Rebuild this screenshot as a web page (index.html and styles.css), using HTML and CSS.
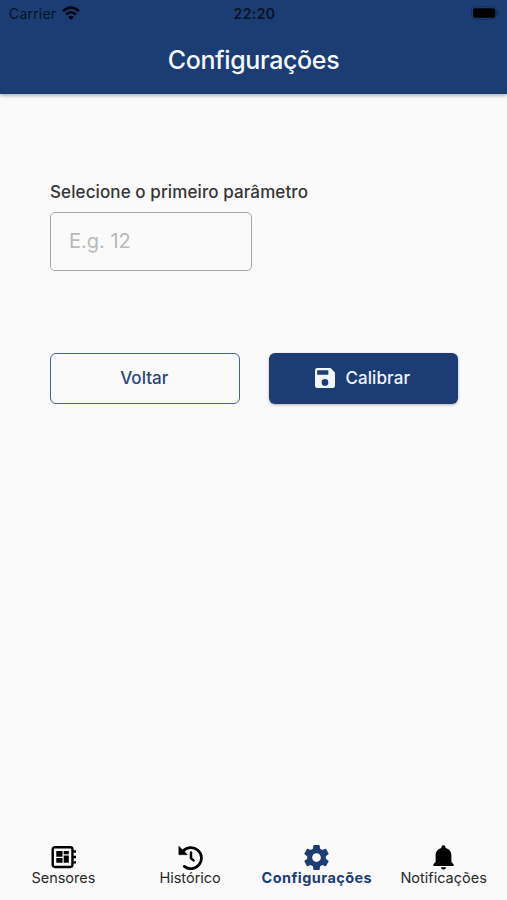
FILE: index.html
```html
<!DOCTYPE html>
<html lang="pt">
<head>
<meta charset="utf-8">
<title>Configurações</title>
<link rel="stylesheet" href="styles.css">
</head>
<body>
<div class="app">
  <header class="header">
    <div class="status">
      <div class="carrier"><span>Carrier</span>
        <svg class="wifi" viewBox="0 0 18 14"><path d="M1 5.2Q9-2 17 5.2M4 8.5Q9 4.1 14 8.5" fill="none" stroke="currentColor" stroke-width="2.5"/><path d="M9 14 6 10.8Q9 8.5 12 10.8Z" fill="currentColor"/></svg>
      </div>
      <time class="clock">22:20</time>
      <svg class="battery" viewBox="0 0 30 14"><rect x="1.500" y=".7" width="25" height="12.600" rx="3.5" fill="none" stroke="#15305f"/><rect x="3" y="2.2" width="22.300" height="9.600" rx="2" fill="#000"/><path d="M27.600 5v4q1.600-.6 1.600-2t-1.600-2" fill="#15305f"/></svg>
    </div>
    <h1 class="title">Configurações</h1>
  </header>
  <main class="content">
    <label class="label" for="param">Selecione o primeiro parâmetro</label>
    <input class="field" id="param" type="text" placeholder="E.g. 12">
    <div class="actions">
      <button class="btn outline"><span>Voltar</span></button>
      <button class="btn filled">
        <svg class="save" viewBox="3 3 18 18"><path fill="currentColor" d="M17 3H5a2 2 0 0 0-2 2v14a2 2 0 0 0 2 2h14a2 2 0 0 0 2-2V7zm-5 16a3 3 0 1 1 0-6 3 3 0 0 1 0 6zm3-10H5V5h10z"/></svg>
        <span>Calibrar</span>
      </button>
    </div>
  </main>
  <nav class="tabs">
    <a class="tab">
      <svg class="icon" viewBox="0 0 26 26"><rect x="1.800" y="2.3" width="20.500" height="20.500" rx="2.2" fill="none" stroke="currentColor" stroke-width="2.5"/><path fill="currentColor" d="M5.500 6.200h6.500v6H5.500zM13.200 6.200h5.300v3.400h-5.300zM5.500 13.500h6.500v5H5.500zM13.200 11h5.300v7.500h-5.300zM23 5.500h3v2.500h-3zM23 11.200h3v2.500h-3zM23 16.800h3v2.500h-3z"/></svg>
      <span>Sensores</span>
    </a>
    <a class="tab">
      <svg class="icon" viewBox="0 0 26 26"><path fill="none" stroke="currentColor" stroke-width="2.900" stroke-linecap="round" d="M5 6.500A11 11 0 1 1 6.600 22.300"/><path fill="currentColor" stroke="currentColor" stroke-width=".8" stroke-linejoin="round" d="M1 1.500v8.500h8.500z"/><path fill="none" stroke="currentColor" stroke-width="2.600" stroke-linecap="round" stroke-linejoin="round" d="M13.500 7.800v6l2.700 2.200"/></svg>
      <span>Histórico</span>
    </a>
    <a class="tab active">
      <svg class="icon gear" viewBox="2 2 20 20"><path fill="currentColor" d="M19.43 12.98c.04-.32.07-.64.07-.98s-.03-.66-.07-.98l2.11-1.65c.19-.15.24-.42.12-.64l-2-3.46c-.12-.22-.39-.3-.61-.22l-2.49 1c-.52-.4-1.08-.73-1.69-.98l-.38-2.65A.49.49 0 0 0 14 2h-4c-.25 0-.46.18-.49.42l-.38 2.65c-.61.25-1.17.59-1.69.98l-2.49-1c-.23-.09-.49 0-.61.22l-2 3.46c-.13.22-.07.49.12.64l2.11 1.65c-.04.32-.07.65-.07.98s.03.66.07.98l-2.11 1.65c-.19.15-.24.42-.12.64l2 3.46c.12.22.39.3.61.22l2.49-1c.52.4 1.08.73 1.69.98l.38 2.65c.03.24.24.42.49.42h4c.25 0 .46-.18.49-.42l.38-2.65c.61-.25 1.17-.59 1.69-.98l2.49 1c.23.09.49 0 .61-.22l2-3.46c.12-.22.07-.49-.12-.64zM12 15.5a3.5 3.5 0 1 1 0-7 3.5 3.5 0 0 1 0 7z"/></svg>
      <span>Configurações</span>
    </a>
    <a class="tab">
      <svg class="icon" viewBox="0 0 26 26"><path fill="currentColor" d="M13 25.500a2.700 2.700 0 0 0 2.700-2.400h-5.400A2.700 2.700 0 0 0 13 25.500m8.200-8.100V11c0-4-2.200-6.800-6-7.800v-.7a2.200 2.200 0 0 0-4.400 0v.7C7 4.200 4.800 7 4.800 11v6.400l-2.300 2.500v2h21v-2z"/></svg>
      <span>Notificações</span>
    </a>
  </nav>
</div>
</body>
</html>
```
FILE: styles.css
```css
* { box-sizing: border-box; }
body { margin: 0; background: #fafafa; font-family: Inter, "Liberation Sans", sans-serif; }
.app { height: 900px; display: flex; flex-direction: column; }
.header { height: 94px; background: #1c3d73; box-shadow: 0 1px 4px rgba(0,0,0,.4); }
.status { height: 27px; padding: 0 7px 0 9px; display: grid; grid-template-columns: 1fr auto 1fr; align-items: center; color: #071225; font-size: 14px; }
.carrier { display: flex; align-items: center; gap: 6px; letter-spacing: .2px; }
.wifi { width: 18px; height: 14px; color: #020914; margin-top: -1px; }
.clock { font-weight: 600; letter-spacing: .4px; }
.battery { width: 30px; height: 14px; justify-self: end; margin-top: -1px; }
.title { margin: 17px 0 0; font-size: 25px; line-height: 32px; font-weight: 500; letter-spacing: -.37px; text-align: center; color: #f5f8fd; }
.content { flex: 1; padding: 86px 49px 0 50px; }
.label { display: block; height: 32px; line-height: 24px; font-size: 17px; font-weight: 500; letter-spacing: .1px; color: #353535; }
.field { display: block; width: 202px; height: 59px; padding: 0 18px 2px; border: 1px solid #a7a7a7; border-radius: 5px; background: transparent; font: 20px Inter, sans-serif; }
.field::placeholder { color: #b9b9b9; opacity: 1; }
.actions { display: grid; grid-template-columns: 1fr 1fr; gap: 29px; margin-top: 82px; }
.btn { height: 51px; padding: 0 1px 1px 0; border-radius: 6px; display: flex; align-items: center; justify-content: center; gap: 10px; font: 500 17px Inter, sans-serif; }
.outline { border: 1px solid #466397; background: transparent; color: #2b4777; }
.filled { border: 0; background: #1c3d73; color: #f1f5fc; letter-spacing: .1px; box-shadow: 0 1px 3px rgba(0,0,0,.3); }
.save { width: 20px; height: 20px; }
.tabs { height: 72px; padding-top: 16px; display: grid; grid-template-columns: repeat(4, 1fr); border-top: 1px solid #f7f7f7; }
.tab { display: flex; flex-direction: column; align-items: center; color: #000; font-size: 14.500px; line-height: 18px; }
.tab span { color: #292929; margin-top: -1px; }
.icon { width: 25px; height: 25px; }
.active, .active span { color: #1c3d73; font-weight: 700; letter-spacing: .43px; }
```
